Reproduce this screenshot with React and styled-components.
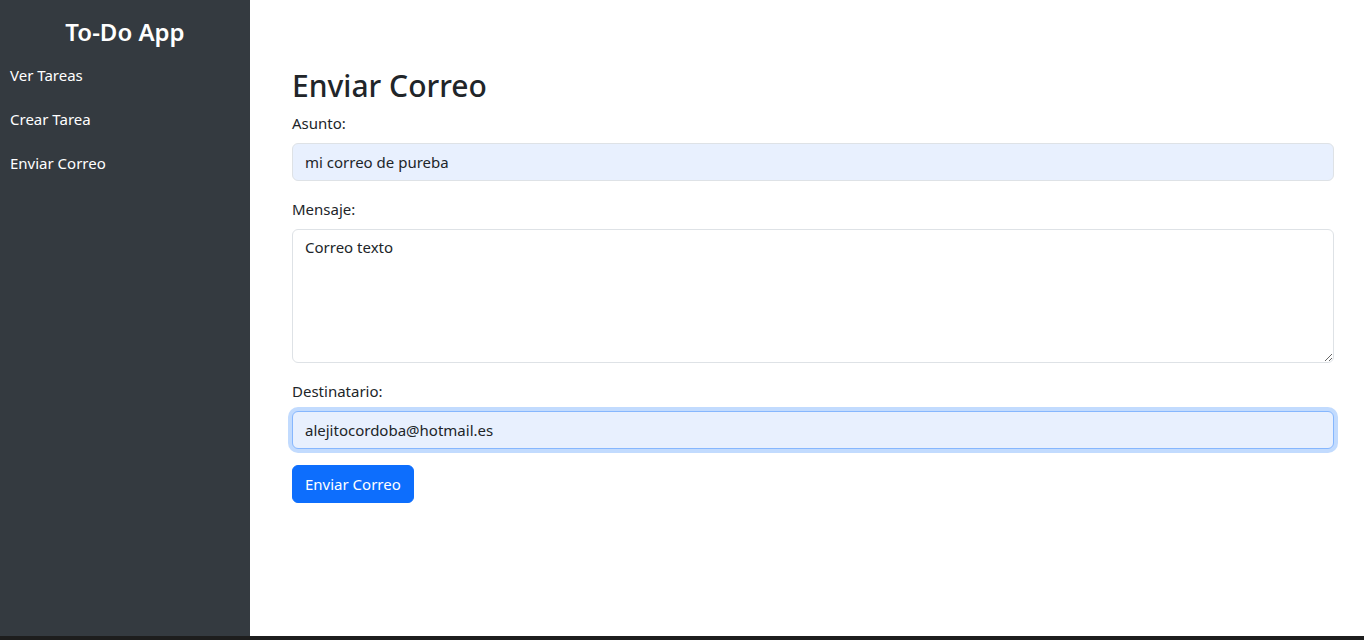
import React from "react";
import styled, { createGlobalStyle } from "styled-components";

const Global = createGlobalStyle`
  html, body { margin: 0; padding: 0; }
  body {
    font-family: "Noto Sans", "Open Sans", sans-serif;
    font-size: 16px;
    line-height: 1.5;
    color: #212529;
    background: #fff;
    overflow: hidden;
  }
  * { box-sizing: border-box; }
`;

const Page = styled.div`
  display: flex;
  flex-direction: column;
  height: 640px;
`;

const Layout = styled.div`
  display: flex;
  height: 636px;
`;

const BottomStrip = styled.div`
  height: 4px;
  background: #1d1d1d;
`;

const Sidebar = styled.nav`
  width: 250px;
  flex-shrink: 0;
  background: #343a40;
  color: #fff;
  padding: 18px 10px;
`;

const Brand = styled.h4`
  margin: 0 0 16px;
  text-align: center;
  font-size: 24px;
  font-weight: 600;
  line-height: 1.2;
`;

const NavList = styled.ul`
  list-style: none;
  margin: 0;
  padding: 0;
  display: flex;
  flex-direction: column;
  gap: 20px;
`;

const NavLink = styled.a`
  color: #fff;
  text-decoration: none;
  font-size: 15px;
  line-height: 24px;
  display: block;
`;

const Main = styled.main`
  flex: 1;
  padding: 68px 30px 0 42px;
`;

const Title = styled.h2`
  margin: 0 0 7px;
  font-size: 30px;
  font-weight: 500;
  line-height: 36px;
`;

const Field = styled.div`
  margin-bottom: 16px;
`;

const Label = styled.label`
  display: block;
  margin-bottom: 8px;
  font-size: 15px;
  line-height: 24px;
  color: #212529;
`;

const Input = styled.input`
  display: block;
  width: 100%;
  height: 38px;
  padding: 6px 12px;
  font: inherit;
  font-size: 15px;
  color: #212529;
  background: #e8f0fe;
  border: 1px solid ${(p) => (p.$focused ? "#86b7fe" : "#dee2e6")};
  border-radius: 6px;
  outline: none;
  box-shadow: ${(p) => (p.$focused ? "0 0 0 4px rgba(13,110,253,0.25)" : "none")};
`;

const TextArea = styled.textarea`
  display: block;
  width: 100%;
  height: 134px;
  padding: 6px 12px;
  font: inherit;
  font-size: 15px;
  color: #212529;
  background: #fff;
  border: 1px solid #dee2e6;
  border-radius: 6px;
  outline: none;
  resize: vertical;
`;

const Button = styled.button`
  height: 38px;
  padding: 6px 12px;
  font: inherit;
  font-size: 15px;
  color: #fff;
  background: #0d6efd;
  border: 1px solid #0d6efd;
  border-radius: 6px;
  cursor: pointer;
`;

export default function App() {
  return (
    <>
      <Global />
      <Page>
        <Layout>
          <Sidebar>
            <Brand>To-Do App</Brand>
            <NavList>
              <li><NavLink href="#">Ver Tareas</NavLink></li>
              <li><NavLink href="#">Crear Tarea</NavLink></li>
              <li><NavLink href="#">Enviar Correo</NavLink></li>
            </NavList>
          </Sidebar>
          <Main>
            <Title>Enviar Correo</Title>
            <Field>
              <Label>Asunto:</Label>
              <Input defaultValue="mi correo de pureba" />
            </Field>
            <Field>
              <Label>Mensaje:</Label>
              <TextArea defaultValue="Correo texto" />
            </Field>
            <Field>
              <Label>Destinatario:</Label>
              <Input $focused defaultValue="alejitocordoba@hotmail.es" />
            </Field>
            <Button>Enviar Correo</Button>
          </Main>
        </Layout>
        <BottomStrip />
      </Page>
    </>
  );
}
